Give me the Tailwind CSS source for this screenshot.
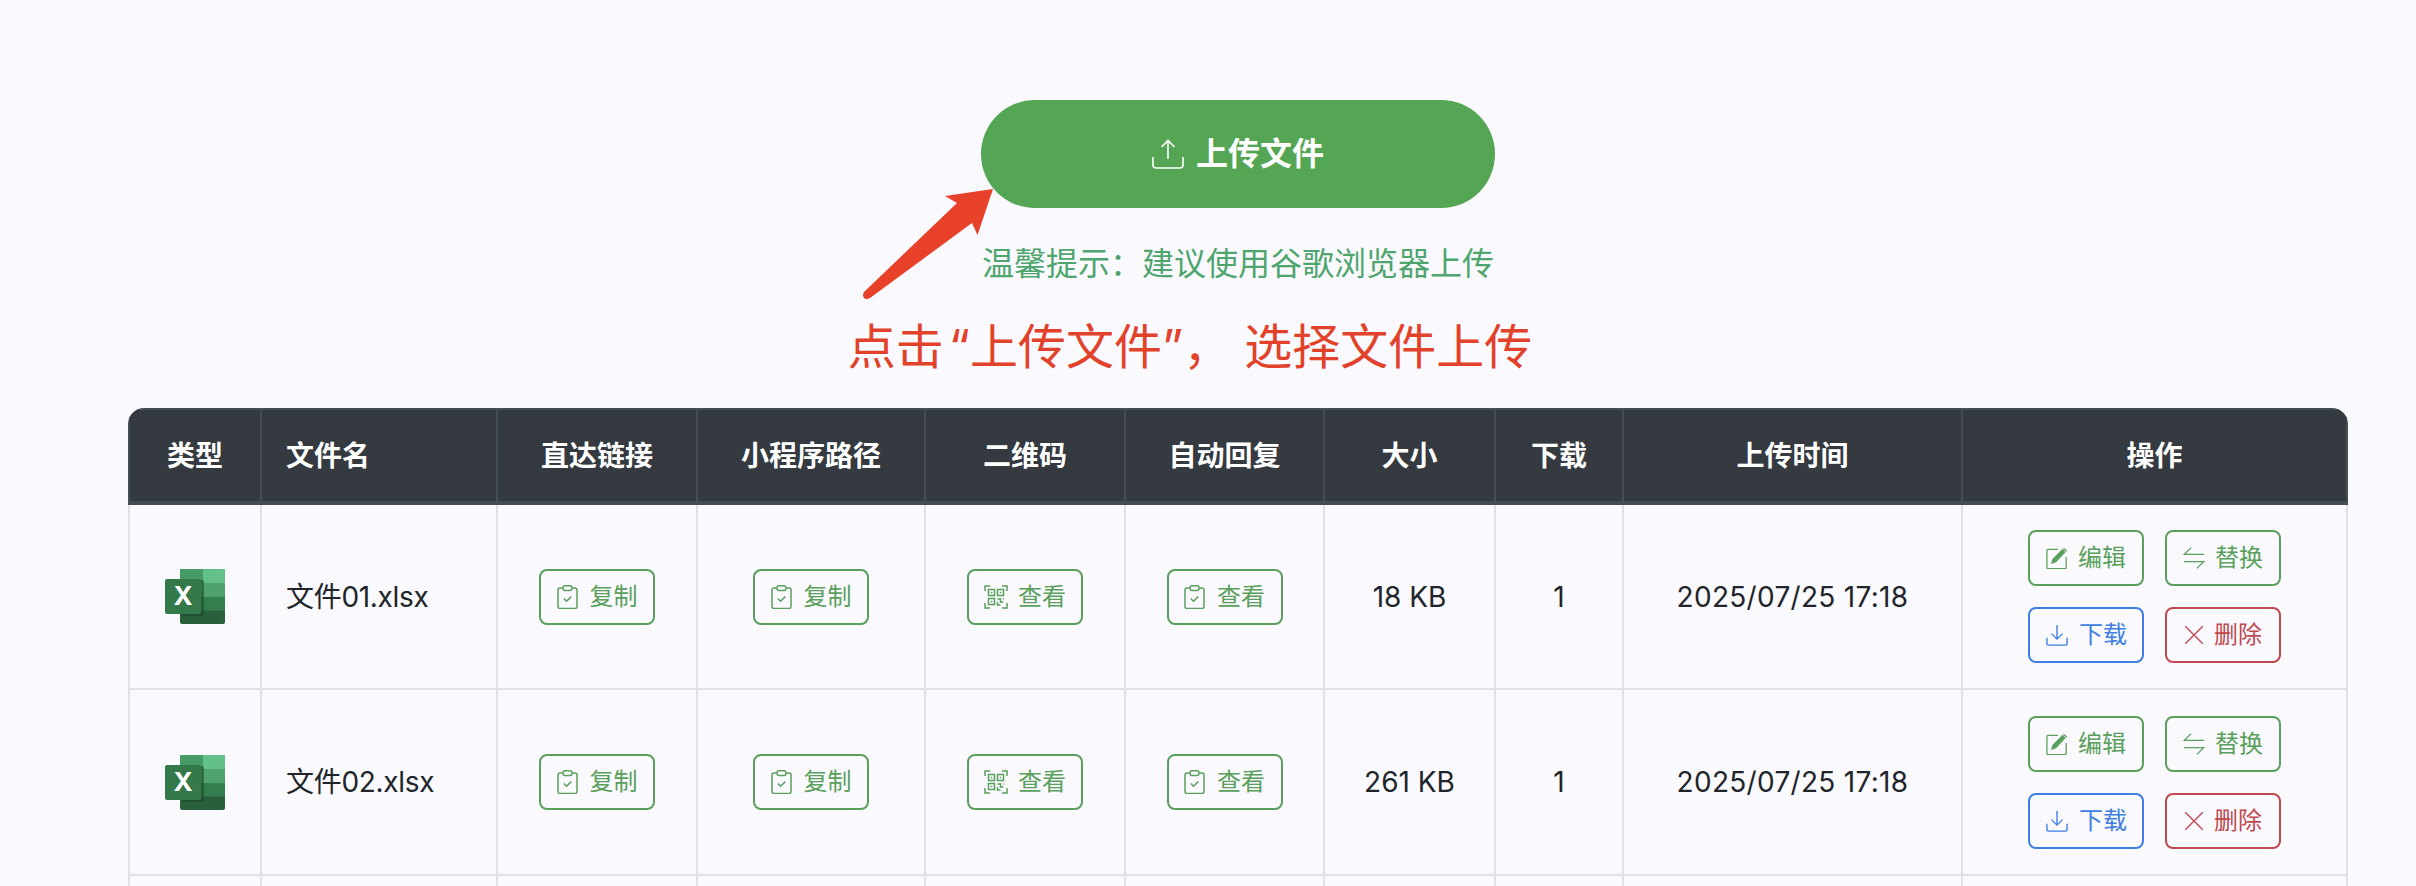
<!DOCTYPE html>
<html lang="zh">
<head>
  <meta charset="utf-8">
  <title>上传文件</title>
  <script src="https://cdn.jsdelivr.net/npm/@tailwindcss/browser@4"></script>
</head>
<body class="bg-[#f9f9fe] font-['Inter','Noto_Sans_CJK_SC',sans-serif] text-[#212529]">
  <!-- Shared icons -->
  <svg class="hidden" xmlns="http://www.w3.org/2000/svg">
    <symbol id="i-clip" viewBox="0 0 21 24">
      <path d="M5.500 3H3a2 2 0 0 0-2 2v16.500a2 2 0 0 0 2 2h15a2 2 0 0 0 2-2V5a2 2 0 0 0-2-2h-2.500" fill="none" stroke="currentColor" stroke-width="1.500"/>
      <rect x="6" y="0.800" width="9" height="4.600" rx="2" fill="none" stroke="currentColor" stroke-width="1.500"/>
      <path d="M6.800 13.500l2.700 2.700 4.800-4.600" fill="none" stroke="currentColor" stroke-width="1.500"/>
    </symbol>
    <symbol id="i-qr" viewBox="0 0 24 24">
      <g fill="none" stroke="currentColor" stroke-width="1.500">
        <path d="M1 6V1h5M18 1h5v5M1 18v5h5M23 18v5h-5"/>
        <rect x="4.500" y="4.500" width="6" height="6"/>
        <rect x="13.500" y="4.500" width="6" height="6"/>
        <rect x="4.500" y="13.500" width="6" height="6"/>
        <path d="M13.500 14h3v3h3M13.500 17v3h3M19.500 13.500v1"/>
      </g>
      <rect x="6.800" y="6.800" width="1.500" height="1.500" fill="currentColor"/>
      <rect x="15.800" y="6.800" width="1.500" height="1.500" fill="currentColor"/>
      <rect x="6.800" y="15.800" width="1.500" height="1.500" fill="currentColor"/>
    </symbol>
    <symbol id="i-edit" viewBox="0 0 24 24">
      <path d="M13 2.500H2.500A1.500 1.500 0 0 0 1 4v18a1.500 1.500 0 0 0 1.500 1.500h18a1.500 1.500 0 0 0 1.500-1.500V11" fill="none" stroke="currentColor" stroke-width="1.400"/>
      <path d="M5.500 18.500l1.500-5.500L18 2l3.500 3.500L11 16.500z" fill="currentColor"/>
      <path d="M19.500 0.800l3.700 3.400-1 1-3.500-3.500z" fill="currentColor"/>
    </symbol>
    <symbol id="i-swap" viewBox="0 0 24 24">
      <path d="M23 8H1.500L8.800 0.700M1 16h21.500L15.200 23.300" fill="none" stroke="currentColor" stroke-width="1.400"/>
    </symbol>
    <symbol id="i-down" viewBox="0 0 24 24">
      <path d="M12 1v15.500M6 10.500l6 6 6-6M1 15v6a2 2 0 0 0 2 2h18a2 2 0 0 0 2-2v-6" fill="none" stroke="currentColor" stroke-width="1.500"/>
    </symbol>
    <symbol id="i-x" viewBox="0 0 24 24">
      <path d="M1.500 1.500l21 21M22.500 1.500l-21 21" fill="none" stroke="currentColor" stroke-width="1.600"/>
    </symbol>
    <symbol id="i-excel" viewBox="0 0 60 55">
      <rect x="15" width="45" height="55" rx="2" fill="#2a5f3c"/>
      <path d="M15 2a2 2 0 0 1 2-2h21v14H15z" fill="#459a66"/>
      <path d="M38 0h20a2 2 0 0 1 2 2v12H38z" fill="#63c08a"/>
      <rect x="15" y="14" width="45" height="14" fill="#4fa26c"/>
      <rect x="15" y="28" width="45" height="13.500" fill="#33804e"/>
      <rect x="17" y="11" width="22" height="36" rx="2" fill="#1c3f28" opacity="0.550"/>
      <rect y="10" width="36" height="35" rx="2" fill="#34794a"/>
      <text x="18" y="36" text-anchor="middle" font-family="Inter, sans-serif" font-size="26" font-weight="700" fill="#fff">X</text>
    </symbol>
  </svg>

  <div class="relative h-[886px] overflow-hidden">
    <!-- Annotation arrow -->
    <svg class="absolute left-0 top-0 z-10" width="1100" height="320" viewBox="0 0 1100 320">
      <path d="M993 189L977.500 235 972 223 870 298Q866 300 864 298 862 295 864 292L957 203 945 196z" fill="#e8412a"/>
    </svg>

    <main class="ml-[128px] w-[2220px] pt-[100px]">
      <section class="flex flex-col items-center">
        <button class="flex h-[108px] w-[514px] items-center justify-center gap-[12px] rounded-[54px] bg-[#55a654] text-[32px] font-semibold text-white">
          <svg width="32" height="30" viewBox="0 0 32 30" fill="none" stroke="currentColor" stroke-width="1.600">
            <path d="M16 20V1.500M9.500 8L16 1.500 22.500 8M1 18v8a3 3 0 0 0 3 3h24a3 3 0 0 0 3-3v-8"/>
          </svg>
          上传文件
        </button>
        <p class="mt-[32px] text-[32px] leading-[48px] text-[#4ea56e]">温馨提示：建议使用谷歌浏览器上传</p>
        <p class="mt-[23px] w-full pr-[96px] text-center text-[48px] leading-[72px] text-[#e2412a]">点击<span class="ml-[5px]">“</span>上传文件”<span class="mr-[13px]">，</span>选择文件上传</p>
      </section>

      <div class="mt-[25px] overflow-hidden rounded-t-[16px]">
        <table class="w-full table-fixed text-center text-[28px]">
          <colgroup>
            <col class="w-[132px]"><col class="w-[236px]"><col class="w-[200px]"><col class="w-[228px]"><col class="w-[200px]"><col class="w-[199px]"><col class="w-[171px]"><col class="w-[128px]"><col class="w-[339px]"><col class="w-[385px]">
          </colgroup>
          <thead class="bg-[#343a40] font-bold text-white">
            <tr class="h-[94px]">
              <th class="border-2 border-b-4 border-[#454d55]">类型</th>
              <th class="border-2 border-b-4 border-[#454d55] px-[24px] text-left">文件名</th>
              <th class="border-2 border-b-4 border-[#454d55]">直达链接</th>
              <th class="border-2 border-b-4 border-[#454d55]">小程序路径</th>
              <th class="border-2 border-b-4 border-[#454d55]">二维码</th>
              <th class="border-2 border-b-4 border-[#454d55]">自动回复</th>
              <th class="border-2 border-b-4 border-[#454d55]">大小</th>
              <th class="border-2 border-b-4 border-[#454d55]">下载</th>
              <th class="border-2 border-b-4 border-[#454d55]">上传时间</th>
              <th class="border-2 border-b-4 border-[#454d55]">操作</th>
            </tr>
          </thead>
          <tbody>
            <tr class="h-[186px]">
              <td class="border-2 border-[#dee2e6]"><svg class="mx-auto" width="60" height="55"><use href="#i-excel"/></svg></td>
              <td class="border-2 border-[#dee2e6] px-[24px] text-left tracking-[-0.3px]">文件01.xlsx</td>
              <td class="border-2 border-[#dee2e6]"><button class="mx-auto flex h-[56px] w-[116px] items-center justify-center gap-[12px] rounded-[8px] border-2 border-[#5a9f5c] text-[24px] text-[#5a9f5c]"><svg width="21" height="24"><use href="#i-clip"/></svg>复制</button></td>
              <td class="border-2 border-[#dee2e6]"><button class="mx-auto flex h-[56px] w-[116px] items-center justify-center gap-[12px] rounded-[8px] border-2 border-[#5a9f5c] text-[24px] text-[#5a9f5c]"><svg width="21" height="24"><use href="#i-clip"/></svg>复制</button></td>
              <td class="border-2 border-[#dee2e6]"><button class="mx-auto flex h-[56px] w-[116px] items-center justify-center gap-[10px] rounded-[8px] border-2 border-[#5a9f5c] text-[24px] text-[#5a9f5c]"><svg width="24" height="24"><use href="#i-qr"/></svg>查看</button></td>
              <td class="border-2 border-[#dee2e6]"><button class="mx-auto flex h-[56px] w-[116px] items-center justify-center gap-[12px] rounded-[8px] border-2 border-[#5a9f5c] text-[24px] text-[#5a9f5c]"><svg width="21" height="24"><use href="#i-clip"/></svg>查看</button></td>
              <td class="border-2 border-[#dee2e6]">18 KB</td>
              <td class="border-2 border-[#dee2e6]">1</td>
              <td class="border-2 border-[#dee2e6] tracking-[0.3px]">2025/07/25 17:18</td>
              <td class="border-2 border-[#dee2e6]">
                <div class="mx-auto grid w-fit grid-cols-2 gap-x-[21px] gap-y-[21px]">
                  <button class="flex h-[56px] w-[116px] items-center justify-center gap-[10px] rounded-[8px] border-2 border-[#5a9f5c] text-[24px] text-[#5a9f5c]"><svg width="22" height="22"><use href="#i-edit"/></svg>编辑</button>
                  <button class="flex h-[56px] w-[116px] items-center justify-center gap-[10px] rounded-[8px] border-2 border-[#5a9f5c] text-[24px] text-[#5a9f5c]"><svg width="22" height="24"><use href="#i-swap"/></svg>替换</button>
                  <button class="flex h-[56px] w-[116px] items-center justify-center gap-[10px] rounded-[8px] border-2 border-[#3e7fe0] text-[24px] text-[#3e7fe0]"><svg width="24" height="22"><use href="#i-down"/></svg>下载</button>
                  <button class="flex h-[56px] w-[116px] items-center justify-center gap-[10px] rounded-[8px] border-2 border-[#c0484e] text-[24px] text-[#c0484e]"><svg width="20" height="20"><use href="#i-x"/></svg>删除</button>
                </div>
              </td>
            </tr>
            <tr class="h-[186px]">
              <td class="border-2 border-[#dee2e6]"><svg class="mx-auto" width="60" height="55"><use href="#i-excel"/></svg></td>
              <td class="border-2 border-[#dee2e6] px-[24px] text-left tracking-[-0.3px]">文件02.xlsx</td>
              <td class="border-2 border-[#dee2e6]"><button class="mx-auto flex h-[56px] w-[116px] items-center justify-center gap-[12px] rounded-[8px] border-2 border-[#5a9f5c] text-[24px] text-[#5a9f5c]"><svg width="21" height="24"><use href="#i-clip"/></svg>复制</button></td>
              <td class="border-2 border-[#dee2e6]"><button class="mx-auto flex h-[56px] w-[116px] items-center justify-center gap-[12px] rounded-[8px] border-2 border-[#5a9f5c] text-[24px] text-[#5a9f5c]"><svg width="21" height="24"><use href="#i-clip"/></svg>复制</button></td>
              <td class="border-2 border-[#dee2e6]"><button class="mx-auto flex h-[56px] w-[116px] items-center justify-center gap-[10px] rounded-[8px] border-2 border-[#5a9f5c] text-[24px] text-[#5a9f5c]"><svg width="24" height="24"><use href="#i-qr"/></svg>查看</button></td>
              <td class="border-2 border-[#dee2e6]"><button class="mx-auto flex h-[56px] w-[116px] items-center justify-center gap-[12px] rounded-[8px] border-2 border-[#5a9f5c] text-[24px] text-[#5a9f5c]"><svg width="21" height="24"><use href="#i-clip"/></svg>查看</button></td>
              <td class="border-2 border-[#dee2e6]">261 KB</td>
              <td class="border-2 border-[#dee2e6]">1</td>
              <td class="border-2 border-[#dee2e6] tracking-[0.3px]">2025/07/25 17:18</td>
              <td class="border-2 border-[#dee2e6]">
                <div class="mx-auto grid w-fit grid-cols-2 gap-x-[21px] gap-y-[21px]">
                  <button class="flex h-[56px] w-[116px] items-center justify-center gap-[10px] rounded-[8px] border-2 border-[#5a9f5c] text-[24px] text-[#5a9f5c]"><svg width="22" height="22"><use href="#i-edit"/></svg>编辑</button>
                  <button class="flex h-[56px] w-[116px] items-center justify-center gap-[10px] rounded-[8px] border-2 border-[#5a9f5c] text-[24px] text-[#5a9f5c]"><svg width="22" height="24"><use href="#i-swap"/></svg>替换</button>
                  <button class="flex h-[56px] w-[116px] items-center justify-center gap-[10px] rounded-[8px] border-2 border-[#3e7fe0] text-[24px] text-[#3e7fe0]"><svg width="24" height="22"><use href="#i-down"/></svg>下载</button>
                  <button class="flex h-[56px] w-[116px] items-center justify-center gap-[10px] rounded-[8px] border-2 border-[#c0484e] text-[24px] text-[#c0484e]"><svg width="20" height="20"><use href="#i-x"/></svg>删除</button>
                </div>
              </td>
            </tr>
            <!-- Next row is cut off by the window, only its borders show -->
            <tr class="h-[186px]">
              <td class="border-2 border-[#dee2e6]"></td><td class="border-2 border-[#dee2e6]"></td><td class="border-2 border-[#dee2e6]"></td><td class="border-2 border-[#dee2e6]"></td><td class="border-2 border-[#dee2e6]"></td><td class="border-2 border-[#dee2e6]"></td><td class="border-2 border-[#dee2e6]"></td><td class="border-2 border-[#dee2e6]"></td><td class="border-2 border-[#dee2e6]"></td><td class="border-2 border-[#dee2e6]"></td>
            </tr>
          </tbody>
        </table>
      </div>
    </main>
  </div>
</body>
</html>
